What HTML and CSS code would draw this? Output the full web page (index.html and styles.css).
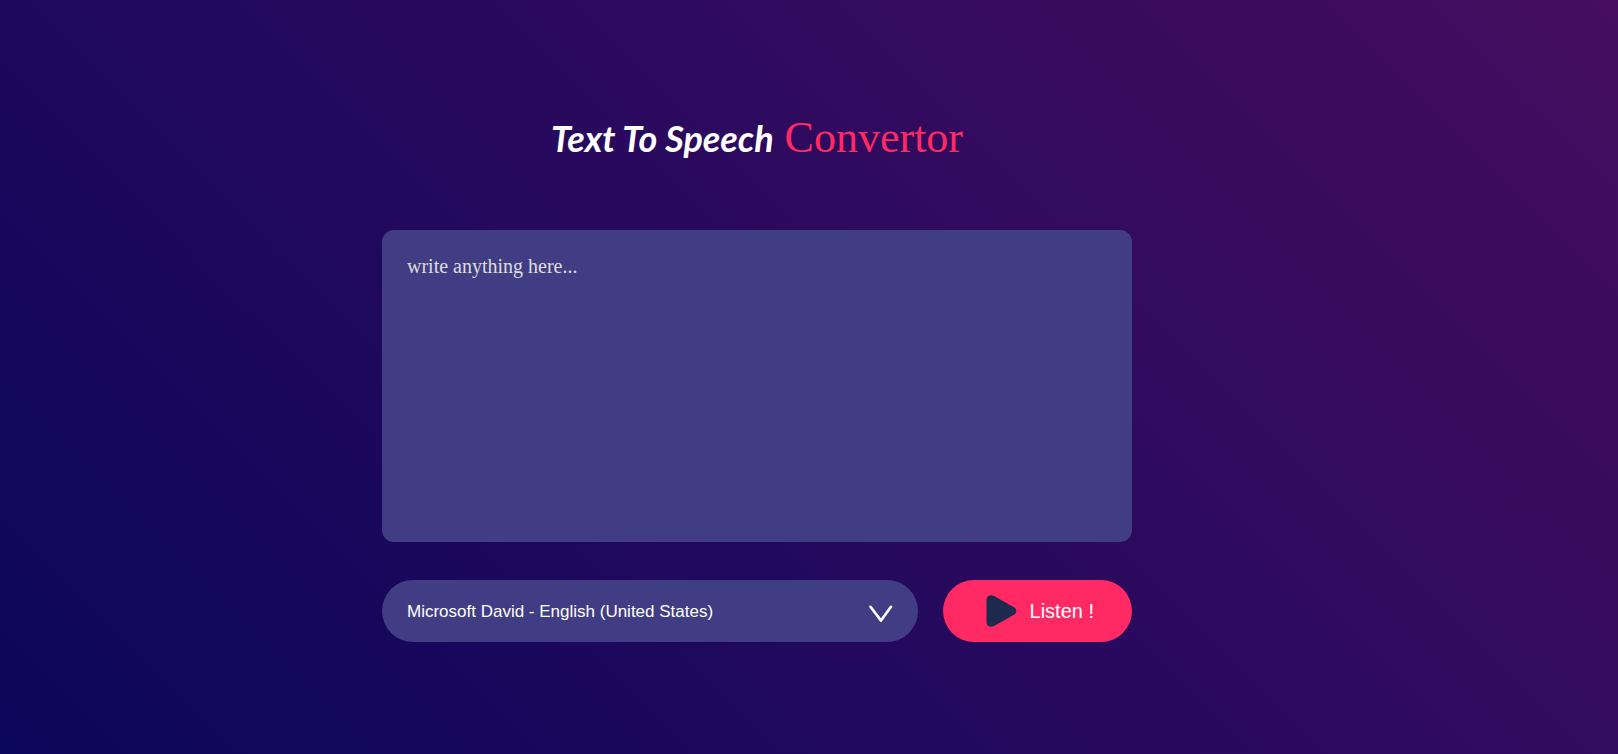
FILE: index.html
```html
<!DOCTYPE html>
<html lang="en">
<head>
<meta charset="utf-8">
<meta name="viewport" content="width=device-width, initial-scale=1">
<title>Text To Speech Convertor</title>
<link rel="stylesheet" href="styles.css">
</head>
<body>
<main class="hero">
  <h1 class="title"><span class="title-script">Text To Speech</span> <span class="title-accent">Convertor</span></h1>
  <textarea class="text-input" aria-label="Text to speak" placeholder="write anything here..."></textarea>
  <div class="row">
    <div class="voice">
      <select class="voice-select" aria-label="Voice">
        <option>Microsoft David - English (United States)</option>
      </select>
      <svg class="voice-arrow" width="24" height="18" viewBox="0 0 24 18" aria-hidden="true">
        <path d="M1.5 1.8 L12 15.6 L22 1.8" fill="none" stroke="#fff" stroke-width="2.6" stroke-linecap="round" stroke-linejoin="round"/>
      </svg>
    </div>
    <button class="listen" type="button">
      <svg width="31" height="32" viewBox="0 0 31 32" aria-hidden="true">
        <path d="M0.500 5 C0.500 1 4 -1 8 1 L27.500 12 C31.300 14 31.300 18 27.500 20 L8 31 C4 33 0.500 31 0.500 27 Z" fill="#1c2a4d"/>
      </svg>
      Listen !
    </button>
  </div>
</main>
</body>
</html>
```
FILE: styles.css
```css
* {
  margin: 0;
  padding: 0;
  box-sizing: border-box;
}

.hero {
  min-height: 100vh;
  padding: 0 128px 0 24px;
  display: flex;
  flex-direction: column;
  align-items: center;
  justify-content: center;
  color: #fff;
  background: linear-gradient(45deg, #0a065b, #460d60);
}

.title {
  margin-bottom: 66px;
  font-family: "Liberation Serif", "Times New Roman", serif;
  font-size: 44px;
  line-height: 52px;
  font-weight: 400;
  text-align: center;
}

.title-script {
  font-family: "Brush Script MT", "Lato", sans-serif;
  font-size: 36px;
  font-style: italic;
  font-weight: 700;
}

.title-accent {
  color: #ff2963;
}

.text-input {
  display: block;
  width: 100%;
  max-width: 750px;
  height: 312px;
  margin-bottom: 38px;
  padding: 25px;
  border: 0;
  outline: 0;
  border-radius: 12px;
  resize: none;
  color: #fff;
  background: #403d84;
  font: 20px/23px "Liberation Serif", "Times New Roman", serif;
}

.text-input::placeholder {
  color: #ddd;
  opacity: 1;
}

.row {
  display: flex;
  gap: 25px;
  width: 100%;
  max-width: 750px;
}

.voice {
  position: relative;
  flex: 1;
  min-width: 0;
}

.voice-select {
  width: 100%;
  height: 62px;
  padding: 0 60px 0 25px;
  border: 0;
  outline: 0;
  border-radius: 31px;
  appearance: none;
  color: #fff;
  background: #403d84;
  font: 17px "Liberation Sans", Arial, sans-serif;
}

.voice-arrow {
  position: absolute;
  top: 25px;
  right: 25px;
  pointer-events: none;
}

.listen {
  display: flex;
  align-items: center;
  gap: 13px;
  height: 62px;
  padding: 0 38px 0 43px;
  border: 0;
  border-radius: 31px;
  color: #fff;
  background: #ff2963;
  font: 20px "Liberation Sans", Arial, sans-serif;
  white-space: nowrap;
  cursor: pointer;
}
```
